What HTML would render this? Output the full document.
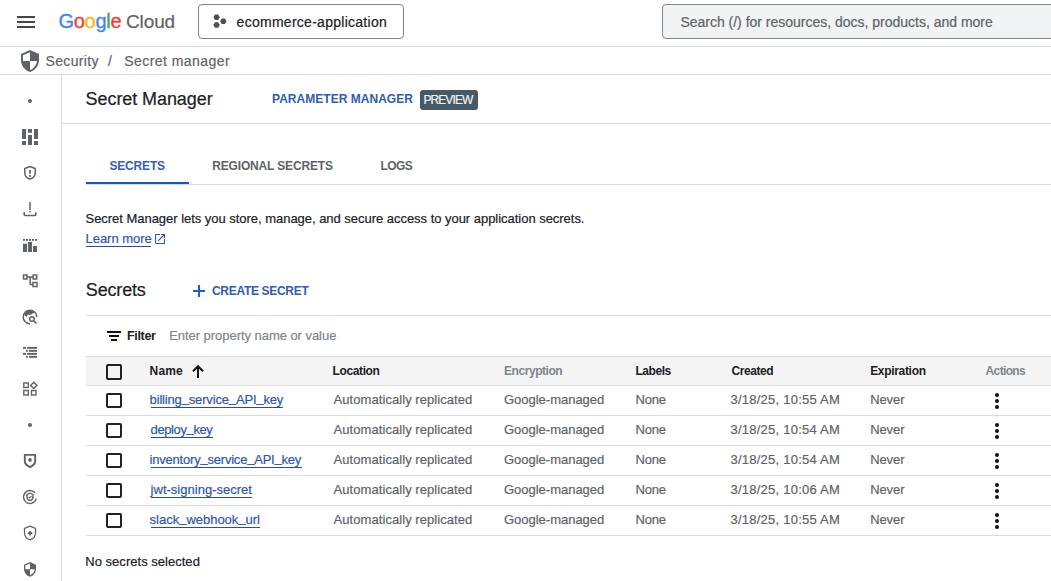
<!DOCTYPE html>
<html><head><meta charset="utf-8"><style>
html,body{margin:0;padding:0;background:#fff;width:1051px;height:581px;overflow:hidden;position:relative}
.t{position:absolute;white-space:nowrap;font-family:"Liberation Sans",sans-serif;line-height:1}
.b{position:absolute}
.i{position:absolute;overflow:visible}
</style></head><body>
<div class="b" style="left:0px;top:46px;width:1051px;height:1px;background:#dadce0"></div>
<div class="b" style="left:0px;top:74px;width:1051px;height:1px;background:#dadce0"></div>
<div class="b" style="left:61px;top:75px;width:1px;height:506px;background:#dadce0"></div>
<div class="b" style="left:62px;top:123px;width:989px;height:1px;background:#dadce0"></div>
<div class="b" style="left:17px;top:16px;width:18px;height:2px;background:#444746"></div>
<div class="b" style="left:17px;top:21px;width:18px;height:2px;background:#444746"></div>
<div class="b" style="left:17px;top:26px;width:18px;height:2px;background:#444746"></div>
<div class="b" style="left:198px;top:4px;width:206px;height:35px;border:1px solid #80868b;border-radius:4px;box-sizing:border-box"></div>
<svg class="i" style="left:0;top:0" width="260" height="46"><polygon points="219.80,17.30 218.20,20.07 215.00,20.07 213.40,17.30 215.00,14.53 218.20,14.53" fill="#4d4f52"/><polygon points="219.80,25.10 218.20,27.87 215.00,27.87 213.40,25.10 215.00,22.33 218.20,22.33" fill="#4d4f52"/><polygon points="226.50,21.20 224.90,23.97 221.70,23.97 220.10,21.20 221.70,18.43 224.90,18.43" fill="#4d4f52"/></svg>
<div class="b" style="left:662px;top:4px;width:400px;height:35px;background:#f1f3f4;border:1px solid #80868b;border-radius:4px;box-sizing:border-box"></div>
<svg class="i" style="left:18px;top:49px" width="24" height="24" viewBox="0 0 24 24"><path fill="#5f6368" d="M12 1L3 5v6c0 5.55 3.84 10.74 9 12 5.16-1.26 9-6.45 9-12V5l-9-4zm0 10.99h7c-.53 4.12-3.28 7.79-7 8.94V12H5V6.3l7-3.11v8.8z"/></svg>
<div class="b" style="left:420px;top:90px;width:58px;height:20px;background:#455a64;border-radius:3px"></div>
<div class="b" style="left:86px;top:184px;width:965px;height:1px;background:#dadce0"></div>
<div class="b" style="left:86px;top:181.7px;width:103px;height:2.3px;background:#1b55b5"></div>
<svg class="i" style="left:155px;top:234px" width="10" height="10" viewBox="0 0 10 10"><g transform="scale(0.5556) translate(-3,-3)"><path fill="#2f56b0" d="M19 19H5V5h7V3H5c-1.11 0-2 .9-2 2v14c0 1.1.89 2 2 2h14c1.1 0 2-.9 2-2v-7h-2v7zM14 3v2h3.59l-9.83 9.83 1.41 1.41L19 6.41V10h2V3h-7z"/></g></svg>
<svg class="i" style="left:193px;top:285px" width="12" height="12" viewBox="0 0 12 12"><path d="M6 0v12M0 6h12" stroke="#1f5ccc" stroke-width="2"/></svg>
<div class="b" style="left:86px;top:315px;width:965px;height:1px;background:#dadce0"></div>
<svg class="i" style="left:107px;top:331px" width="14" height="10" viewBox="0 0 14 10"><path d="M0 1.1h14M2 5.1h10M4 9.1h6" stroke="#111" stroke-width="2"/></svg>
<div class="b" style="left:86px;top:356px;width:965px;height:1px;background:#dadce0"></div>
<div class="b" style="left:86px;top:357px;width:965px;height:28px;background:#f4f4f4"></div>
<div class="b" style="left:86px;top:385px;width:965px;height:1px;background:#dadce0"></div>
<div class="b" style="left:106px;top:364.3px;width:15.5px;height:15.5px;border:2px solid #202124;border-radius:2px;box-sizing:border-box"></div>
<svg class="i" style="left:191px;top:364px" width="14" height="14" viewBox="0 0 14 14"><path d="M7 14V2.2M2 7.2l5-5 5 5" stroke="#111" stroke-width="2" fill="none"/></svg>
<div class="b" style="left:86px;top:415px;width:965px;height:1px;background:#dadce0"></div>
<div class="b" style="left:106px;top:392.5px;width:15.5px;height:15.5px;border:2px solid #202124;border-radius:2px;box-sizing:border-box"></div>
<div class="b" style="left:994.5px;top:393px;width:4px;height:4px;border-radius:50%;background:#111"></div>
<div class="b" style="left:994.5px;top:399px;width:4px;height:4px;border-radius:50%;background:#111"></div>
<div class="b" style="left:994.5px;top:405px;width:4px;height:4px;border-radius:50%;background:#111"></div>
<div class="b" style="left:86px;top:445px;width:965px;height:1px;background:#dadce0"></div>
<div class="b" style="left:106px;top:422.5px;width:15.5px;height:15.5px;border:2px solid #202124;border-radius:2px;box-sizing:border-box"></div>
<div class="b" style="left:994.5px;top:423px;width:4px;height:4px;border-radius:50%;background:#111"></div>
<div class="b" style="left:994.5px;top:429px;width:4px;height:4px;border-radius:50%;background:#111"></div>
<div class="b" style="left:994.5px;top:435px;width:4px;height:4px;border-radius:50%;background:#111"></div>
<div class="b" style="left:86px;top:475px;width:965px;height:1px;background:#dadce0"></div>
<div class="b" style="left:106px;top:452.5px;width:15.5px;height:15.5px;border:2px solid #202124;border-radius:2px;box-sizing:border-box"></div>
<div class="b" style="left:994.5px;top:453px;width:4px;height:4px;border-radius:50%;background:#111"></div>
<div class="b" style="left:994.5px;top:459px;width:4px;height:4px;border-radius:50%;background:#111"></div>
<div class="b" style="left:994.5px;top:465px;width:4px;height:4px;border-radius:50%;background:#111"></div>
<div class="b" style="left:86px;top:505px;width:965px;height:1px;background:#dadce0"></div>
<div class="b" style="left:106px;top:482.5px;width:15.5px;height:15.5px;border:2px solid #202124;border-radius:2px;box-sizing:border-box"></div>
<div class="b" style="left:994.5px;top:483px;width:4px;height:4px;border-radius:50%;background:#111"></div>
<div class="b" style="left:994.5px;top:489px;width:4px;height:4px;border-radius:50%;background:#111"></div>
<div class="b" style="left:994.5px;top:495px;width:4px;height:4px;border-radius:50%;background:#111"></div>
<div class="b" style="left:86px;top:535px;width:965px;height:1px;background:#dadce0"></div>
<div class="b" style="left:106px;top:512.5px;width:15.5px;height:15.5px;border:2px solid #202124;border-radius:2px;box-sizing:border-box"></div>
<div class="b" style="left:994.5px;top:513px;width:4px;height:4px;border-radius:50%;background:#111"></div>
<div class="b" style="left:994.5px;top:519px;width:4px;height:4px;border-radius:50%;background:#111"></div>
<div class="b" style="left:994.5px;top:525px;width:4px;height:4px;border-radius:50%;background:#111"></div>
<div class="b" style="left:28px;top:98.7px;width:4px;height:4px;border-radius:50%;background:#5f6368"></div>
<div class="b" style="left:28px;top:423px;width:4px;height:4px;border-radius:50%;background:#5f6368"></div>
<svg class="i" style="left:22px;top:129px" width="16" height="16" viewBox="0 0 16 16"><g fill="#5f6368"><rect x="0" y="0" width="4" height="10"/><rect x="0" y="12" width="4" height="4"/><rect x="6" y="0" width="4" height="3.8"/><rect x="6" y="6" width="4" height="10"/><rect x="12" y="0" width="4" height="10"/><rect x="12" y="12" width="4" height="4"/></g></svg>
<svg class="i" style="left:23px;top:165px" width="14" height="16" viewBox="0 0 14 16"><path d="M7 1.55L1.75 3.5v4c0 3.1 2.2 5.8 5.25 6.55 3.05-.75 5.25-3.45 5.25-6.55v-4z" stroke="#5f6368" stroke-width="1.5" fill="none" stroke-linejoin="round"/><rect x="6.1" y="5" width="1.8" height="3.7" fill="#5f6368"/><rect x="6.1" y="10" width="1.8" height="1.8" fill="#5f6368"/></svg>
<svg class="i" style="left:23px;top:201px" width="14" height="16" viewBox="0 0 14 16"><path d="M7 1v8" stroke="#5f6368" stroke-width="1.5"/><rect x="6.2" y="10" width="1.6" height="1.4" fill="#5f6368"/><path d="M1.2 11.2v2.4c0 .6.3.9.9.9h9.8c.6 0 .9-.3.9-.9v-2.4" stroke="#5f6368" stroke-width="1.6" fill="none"/></svg>
<svg class="i" style="left:23px;top:238px" width="14" height="15" viewBox="0 0 14 15"><g fill="#5f6368"><rect x="0" y="1" width="2" height="1.8"/><rect x="3" y="1" width="2" height="1.8"/><rect x="6" y="1" width="2" height="1.8"/><rect x="9" y="1" width="2" height="1.8"/><rect x="12" y="1" width="2" height="1.8"/><rect x="0" y="5.7" width="4" height="8.3"/><rect x="5" y="4" width="4" height="10"/><rect x="10" y="8" width="4" height="6"/></g></svg>
<svg class="i" style="left:22px;top:273px" width="16" height="16" viewBox="0 0 16 16"><g stroke="#5f6368" stroke-width="1.5" fill="none"><rect x="1.5" y="2" width="3.5" height="4"/><rect x="11.2" y="2" width="3.5" height="4"/><rect x="11" y="9.5" width="4" height="4"/><path d="M5 4h6.2M8.2 4v7.5H11"/></g></svg>
<svg class="i" style="left:22px;top:309px" width="16" height="16" viewBox="0 0 16 16"><path d="M8 1.2A6.8 6.8 0 1 0 8 14.8" stroke="#5f6368" stroke-width="1.5" fill="none"/><path d="M8 1.2A6.8 6.8 0 0 1 14.8 8" stroke="#5f6368" stroke-width="1.5" fill="none"/><path d="M2 5.5C3 3 5.5 1.5 8 1.5c2 0 3.5 1 4.5 2L10 5 8 6 6 5.5 4.5 8z" fill="#5f6368"/><circle cx="10" cy="10" r="2.3" stroke="#5f6368" stroke-width="1.5" fill="none"/><path d="M11.8 11.8l2.7 2.7" stroke="#5f6368" stroke-width="1.6"/></svg>
<svg class="i" style="left:23px;top:346px" width="14" height="13" viewBox="0 0 14 13"><g fill="#5f6368"><rect x="0" y="0.9" width="3" height="1.9"/><rect x="4.2" y="0.9" width="9.8" height="1.9"/><rect x="3" y="3.9" width="1.8" height="1.9"/><rect x="6" y="3.9" width="8" height="1.9"/><rect x="0" y="6.9" width="3" height="1.9"/><rect x="4.2" y="6.9" width="9.8" height="1.9"/><rect x="3" y="9.9" width="1.8" height="1.9"/><rect x="6" y="9.9" width="8" height="1.9"/></g></svg>
<svg class="i" style="left:22px;top:381px" width="16" height="16" viewBox="0 0 16 16"><g stroke="#5f6368" stroke-width="1.4" fill="none"><rect x="1.8" y="2" width="4.5" height="4.5"/><rect x="1.8" y="9.5" width="4.5" height="4.5"/><rect x="9.5" y="9.5" width="4.5" height="4.5"/><path d="M11.8 1.2l3.2 3.2-3.2 3.2-3.2-3.2z"/></g></svg>
<svg class="i" style="left:23px;top:453px" width="14" height="16" viewBox="0 0 14 16"><path d="M1.8 1.9h10.4v6.4c0 2.4-2.2 4.4-5.2 5.9-3-1.5-5.2-3.5-5.2-5.9z" stroke="#5f6368" stroke-width="1.9" fill="none" stroke-linejoin="round"/><circle cx="7" cy="6.9" r="1.8" fill="#5f6368"/></svg>
<svg class="i" style="left:22px;top:489px" width="16" height="16" viewBox="0 0 16 16"><path d="M12.98 3.82A6.5 6.5 0 1 0 14.28 9.68" stroke="#5f6368" stroke-width="1.5" fill="none"/><path d="M8 4.2l-3 1.2v2.3c0 1.9 1.3 3.5 3 4 1.7-.5 3-2.1 3-4V5.4z" stroke="#5f6368" stroke-width="1.4" fill="none"/><path d="M6.6 7.8l1 1 1.8-1.8" stroke="#5f6368" stroke-width="1.1" fill="none"/></svg>
<svg class="i" style="left:23px;top:525px" width="14" height="16" viewBox="0 0 14 16"><path d="M7 1.2L1.5 3.3v4.2c0 3.4 2.3 6.5 5.5 7.4 3.2-.9 5.5-4 5.5-7.4V3.3z" stroke="#5f6368" stroke-width="1.25" fill="none" stroke-linejoin="round"/><path d="M7 6v4.5M4.8 8.2h4.5" stroke="#5f6368" stroke-width="1.7"/></svg>
<svg class="i" style="left:22px;top:561px" width="16" height="16" viewBox="0 0 16 16"><g transform="scale(0.6667) translate(0,0.5)"><path fill="#5f6368" d="M12 1L3 5v6c0 5.55 3.84 10.74 9 12 5.16-1.26 9-6.45 9-12V5l-9-4zm0 10.99h7c-.53 4.12-3.28 7.79-7 8.94V12H5V6.3l7-3.11v8.8z"/></g></svg>
<span class="t" style="left:236.6px;top:15.15px;font-size:14px;font-weight:400;color:#202124;letter-spacing:0.27px;-webkit-text-stroke:0.2px currentColor;">ecommerce-application</span>
<span class="t" style="left:680.4px;top:14.75px;font-size:14px;font-weight:400;color:#5f6368;letter-spacing:-0.008px;-webkit-text-stroke:0.2px currentColor;">Search (/) for resources, docs, products, and more</span>
<span class="t" style="left:45.5px;top:54.45px;font-size:14px;font-weight:400;color:#5f6368;letter-spacing:0.357px;-webkit-text-stroke:0.2px currentColor;">Security</span>
<span class="t" style="left:108px;top:54.45px;font-size:14px;font-weight:400;color:#5f6368;-webkit-text-stroke:0.2px currentColor;">/</span>
<span class="t" style="left:124.3px;top:54.15px;font-size:14px;font-weight:400;color:#5f6368;letter-spacing:0.438px;-webkit-text-stroke:0.2px currentColor;">Secret manager</span>
<span class="t" style="left:85.6px;top:89.76px;font-size:18px;font-weight:400;color:#202124;letter-spacing:-0.077px;-webkit-text-stroke:0.2px currentColor;">Secret Manager</span>
<span class="t" style="left:272px;top:92.84px;font-size:12px;font-weight:700;color:#2f5cb5;letter-spacing:0.031px;">PARAMETER MANAGER</span>
<span class="t" style="left:423.4px;top:93.84px;font-size:12px;font-weight:400;color:#f1f3f4;letter-spacing:-0.9px;-webkit-text-stroke:0.2px currentColor;">PREVIEW</span>
<span class="t" style="left:109.4px;top:160.24px;font-size:12px;font-weight:700;color:#335fb5;letter-spacing:-0.167px;">SECRETS</span>
<span class="t" style="left:212.2px;top:160.24px;font-size:12px;font-weight:700;color:#5f6368;letter-spacing:-0.153px;">REGIONAL SECRETS</span>
<span class="t" style="left:380.5px;top:160.24px;font-size:12px;font-weight:700;color:#5f6368;letter-spacing:-0.567px;">LOGS</span>
<span class="t" style="left:85.5px;top:211.5px;font-size:13px;font-weight:400;color:#202124;letter-spacing:-0.03px;-webkit-text-stroke:0.2px currentColor;">Secret Manager lets you store, manage, and secure access to your application secrets.</span>
<span class="t" style="left:85.5px;top:231.5px;font-size:13px;font-weight:400;color:#2f56b0;letter-spacing:-0.033px;-webkit-text-stroke:0.2px currentColor;">Learn more</span>
<span class="t" style="left:85.8px;top:281.16px;font-size:18px;font-weight:400;color:#202124;letter-spacing:-0.167px;-webkit-text-stroke:0.2px currentColor;">Secrets</span>
<span class="t" style="left:212px;top:284.94px;font-size:12px;font-weight:700;color:#2f5cb5;letter-spacing:-0.308px;">CREATE SECRET</span>
<span class="t" style="left:127px;top:329.72px;font-size:12.5px;font-weight:700;color:#202124;letter-spacing:-0.32px;">Filter</span>
<span class="t" style="left:169.2px;top:329.3px;font-size:13px;font-weight:400;color:#80868b;letter-spacing:-0.044px;-webkit-text-stroke:0.2px currentColor;">Enter property name or value</span>
<span class="t" style="left:149.6px;top:365.04px;font-size:12px;font-weight:700;color:#202124;letter-spacing:0.133px;">Name</span>
<span class="t" style="left:332.6px;top:365.04px;font-size:12px;font-weight:700;color:#202124;letter-spacing:-0.386px;">Location</span>
<span class="t" style="left:504px;top:365.04px;font-size:12px;font-weight:700;color:#80868b;letter-spacing:-0.444px;">Encryption</span>
<span class="t" style="left:635.4px;top:365.04px;font-size:12px;font-weight:700;color:#202124;letter-spacing:-0.44px;">Labels</span>
<span class="t" style="left:731.5px;top:365.04px;font-size:12px;font-weight:700;color:#202124;letter-spacing:-0.433px;">Created</span>
<span class="t" style="left:870.2px;top:365.04px;font-size:12px;font-weight:700;color:#202124;letter-spacing:-0.322px;">Expiration</span>
<span class="t" style="left:985.6px;top:365.04px;font-size:12px;font-weight:700;color:#80868b;letter-spacing:-0.65px;">Actions</span>
<span class="t" style="left:149.6px;top:393.0px;font-size:13px;font-weight:400;color:#2f56b0;letter-spacing:-0.164px;-webkit-text-stroke:0.2px currentColor;">billing<span style="position:relative;top:-2px">_</span>service<span style="position:relative;top:-2px">_</span>API<span style="position:relative;top:-2px">_</span>key</span>
<span class="t" style="left:333.6px;top:393.0px;font-size:13px;font-weight:400;color:#5f6368;letter-spacing:0.061px;-webkit-text-stroke:0.2px currentColor;">Automatically replicated</span>
<span class="t" style="left:504px;top:393.0px;font-size:13px;font-weight:400;color:#5f6368;letter-spacing:-0.015px;-webkit-text-stroke:0.2px currentColor;">Google-managed</span>
<span class="t" style="left:635.4px;top:393.0px;font-size:13px;font-weight:400;color:#5f6368;letter-spacing:-0.133px;-webkit-text-stroke:0.2px currentColor;">None</span>
<span class="t" style="left:730.5px;top:393.0px;font-size:13px;font-weight:400;color:#5f6368;letter-spacing:0.237px;-webkit-text-stroke:0.2px currentColor;">3/18/25, 10:55 AM</span>
<span class="t" style="left:870.2px;top:393.0px;font-size:13px;font-weight:400;color:#5f6368;letter-spacing:-0.1px;-webkit-text-stroke:0.2px currentColor;">Never</span>
<span class="t" style="left:150.6px;top:423.0px;font-size:13px;font-weight:400;color:#2f56b0;letter-spacing:-0.389px;-webkit-text-stroke:0.2px currentColor;">deploy<span style="position:relative;top:-2px">_</span>key</span>
<span class="t" style="left:333.6px;top:423.0px;font-size:13px;font-weight:400;color:#5f6368;letter-spacing:0.061px;-webkit-text-stroke:0.2px currentColor;">Automatically replicated</span>
<span class="t" style="left:504px;top:423.0px;font-size:13px;font-weight:400;color:#5f6368;letter-spacing:-0.015px;-webkit-text-stroke:0.2px currentColor;">Google-managed</span>
<span class="t" style="left:635.4px;top:423.0px;font-size:13px;font-weight:400;color:#5f6368;letter-spacing:-0.133px;-webkit-text-stroke:0.2px currentColor;">None</span>
<span class="t" style="left:730.5px;top:423.0px;font-size:13px;font-weight:400;color:#5f6368;letter-spacing:0.237px;-webkit-text-stroke:0.2px currentColor;">3/18/25, 10:54 AM</span>
<span class="t" style="left:870.2px;top:423.0px;font-size:13px;font-weight:400;color:#5f6368;letter-spacing:-0.1px;-webkit-text-stroke:0.2px currentColor;">Never</span>
<span class="t" style="left:149.6px;top:453.0px;font-size:13px;font-weight:400;color:#2f56b0;letter-spacing:-0.212px;-webkit-text-stroke:0.2px currentColor;">inventory<span style="position:relative;top:-2px">_</span>service<span style="position:relative;top:-2px">_</span>API<span style="position:relative;top:-2px">_</span>key</span>
<span class="t" style="left:333.6px;top:453.0px;font-size:13px;font-weight:400;color:#5f6368;letter-spacing:0.061px;-webkit-text-stroke:0.2px currentColor;">Automatically replicated</span>
<span class="t" style="left:504px;top:453.0px;font-size:13px;font-weight:400;color:#5f6368;letter-spacing:-0.015px;-webkit-text-stroke:0.2px currentColor;">Google-managed</span>
<span class="t" style="left:635.4px;top:453.0px;font-size:13px;font-weight:400;color:#5f6368;letter-spacing:-0.133px;-webkit-text-stroke:0.2px currentColor;">None</span>
<span class="t" style="left:730.5px;top:453.0px;font-size:13px;font-weight:400;color:#5f6368;letter-spacing:0.237px;-webkit-text-stroke:0.2px currentColor;">3/18/25, 10:54 AM</span>
<span class="t" style="left:870.2px;top:453.0px;font-size:13px;font-weight:400;color:#5f6368;letter-spacing:-0.1px;-webkit-text-stroke:0.2px currentColor;">Never</span>
<span class="t" style="left:150.6px;top:483.0px;font-size:13px;font-weight:400;color:#2f56b0;letter-spacing:0.012px;-webkit-text-stroke:0.2px currentColor;">jwt-signing-secret</span>
<span class="t" style="left:333.6px;top:483.0px;font-size:13px;font-weight:400;color:#5f6368;letter-spacing:0.061px;-webkit-text-stroke:0.2px currentColor;">Automatically replicated</span>
<span class="t" style="left:504px;top:483.0px;font-size:13px;font-weight:400;color:#5f6368;letter-spacing:-0.015px;-webkit-text-stroke:0.2px currentColor;">Google-managed</span>
<span class="t" style="left:635.4px;top:483.0px;font-size:13px;font-weight:400;color:#5f6368;letter-spacing:-0.133px;-webkit-text-stroke:0.2px currentColor;">None</span>
<span class="t" style="left:730.5px;top:483.0px;font-size:13px;font-weight:400;color:#5f6368;letter-spacing:0.237px;-webkit-text-stroke:0.2px currentColor;">3/18/25, 10:06 AM</span>
<span class="t" style="left:870.2px;top:483.0px;font-size:13px;font-weight:400;color:#5f6368;letter-spacing:-0.1px;-webkit-text-stroke:0.2px currentColor;">Never</span>
<span class="t" style="left:149.6px;top:513.0px;font-size:13px;font-weight:400;color:#2f56b0;letter-spacing:-0.013px;-webkit-text-stroke:0.2px currentColor;">slack<span style="position:relative;top:-2px">_</span>webhook<span style="position:relative;top:-2px">_</span>url</span>
<span class="t" style="left:333.6px;top:513.0px;font-size:13px;font-weight:400;color:#5f6368;letter-spacing:0.061px;-webkit-text-stroke:0.2px currentColor;">Automatically replicated</span>
<span class="t" style="left:504px;top:513.0px;font-size:13px;font-weight:400;color:#5f6368;letter-spacing:-0.015px;-webkit-text-stroke:0.2px currentColor;">Google-managed</span>
<span class="t" style="left:635.4px;top:513.0px;font-size:13px;font-weight:400;color:#5f6368;letter-spacing:-0.133px;-webkit-text-stroke:0.2px currentColor;">None</span>
<span class="t" style="left:730.5px;top:513.0px;font-size:13px;font-weight:400;color:#5f6368;letter-spacing:0.237px;-webkit-text-stroke:0.2px currentColor;">3/18/25, 10:55 AM</span>
<span class="t" style="left:870.2px;top:513.0px;font-size:13px;font-weight:400;color:#5f6368;letter-spacing:-0.1px;-webkit-text-stroke:0.2px currentColor;">Never</span>
<span class="t" style="left:85.3px;top:555.2px;font-size:13px;font-weight:400;color:#202124;letter-spacing:0.022px;-webkit-text-stroke:0.2px currentColor;">No secrets selected</span>
<span class="t" style="left:126px;top:11.72px;font-size:19px;font-weight:400;color:#5f6368;letter-spacing:-0.125px;-webkit-text-stroke:0.2px currentColor;">Cloud</span>
<span class="t" style="left:58.5px;top:10.87px;font-size:20px;letter-spacing:-0.3px;-webkit-text-stroke:0.35px currentColor"><span style="color:#4285f4">G</span><span style="color:#ea4335">o</span><span style="color:#fbbc05">o</span><span style="color:#4285f4">g</span><span style="color:#34a853">l</span><span style="color:#ea4335">e</span></span>
<div class="b" style="left:86px;top:246px;width:65px;height:1px;background:#2c4a9e"></div>
<div class="b" style="left:151px;top:407px;width:132px;height:1px;background:#2c4a9e"></div>
<div class="b" style="left:151px;top:437px;width:62px;height:1px;background:#2c4a9e"></div>
<div class="b" style="left:151px;top:467px;width:151px;height:1px;background:#2c4a9e"></div>
<div class="b" style="left:151px;top:497px;width:101px;height:1px;background:#2c4a9e"></div>
<div class="b" style="left:151px;top:527px;width:109px;height:1px;background:#2c4a9e"></div>
</body></html>
